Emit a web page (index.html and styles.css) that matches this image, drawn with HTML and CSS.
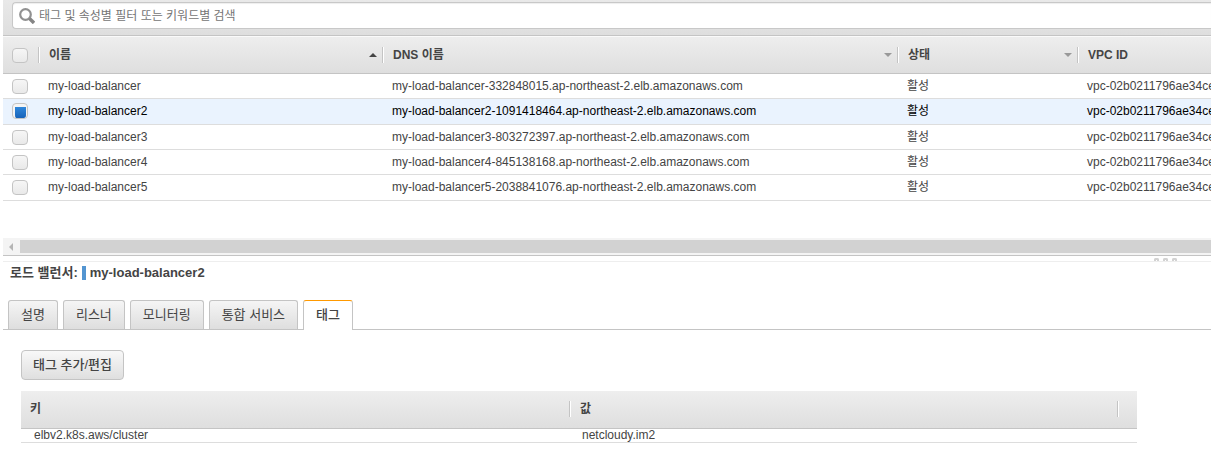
FILE: index.html
```html
<!DOCTYPE html>
<html lang="ko">
<head>
<meta charset="utf-8">
<title>로드 밸런서</title>
<link rel="stylesheet" href="styles.css">
</head>
<body>
<main class="console">
  <form class="search-bar">
    <label class="search-box">
      <svg class="search-icon" viewBox="0 0 16 16" aria-hidden="true">
        <circle cx="6.5" cy="6.5" r="5.3" fill="none" stroke="#919191" stroke-width="2.2"/>
        <path d="M10.5 10.5L15 15" fill="none" stroke="#858585" stroke-width="3.4"/>
      </svg>
      <input class="search-input" type="text" aria-label="검색" placeholder="태그 및 속성별 필터 또는 키워드별 검색">
    </label>
  </form>

  <div class="grid-area">
    <table class="grid">
      <colgroup><col class="col-check"><col class="col-name"><col class="col-dns"><col class="col-state"><col></colgroup>
      <thead>
        <tr>
          <th><input class="check" type="checkbox" aria-label="모두 선택"></th>
          <th><div class="head"><span>이름</span><span class="sort up"></span></div></th>
          <th><div class="head"><span>DNS 이름</span><span class="sort"></span></div></th>
          <th><div class="head"><span>상태</span><span class="sort"></span></div></th>
          <th><div class="head"><span>VPC ID</span></div></th>
        </tr>
      </thead>
      <tbody>
        <tr><td><input class="check" type="checkbox" aria-label="my-load-balancer"></td><td>my-load-balancer</td><td>my-load-balancer-332848015.ap-northeast-2.elb.amazonaws.com</td><td>활성</td><td>vpc-02b0211796ae34ce</td></tr>
        <tr class="selected"><td><input class="check" type="checkbox" aria-label="my-load-balancer2" checked></td><td>my-load-balancer2</td><td>my-load-balancer2-1091418464.ap-northeast-2.elb.amazonaws.com</td><td>활성</td><td>vpc-02b0211796ae34ce</td></tr>
        <tr><td><input class="check" type="checkbox" aria-label="my-load-balancer3"></td><td>my-load-balancer3</td><td>my-load-balancer3-803272397.ap-northeast-2.elb.amazonaws.com</td><td>활성</td><td>vpc-02b0211796ae34ce</td></tr>
        <tr><td><input class="check" type="checkbox" aria-label="my-load-balancer4"></td><td>my-load-balancer4</td><td>my-load-balancer4-845138168.ap-northeast-2.elb.amazonaws.com</td><td>활성</td><td>vpc-02b0211796ae34ce</td></tr>
        <tr class="last"><td><input class="check" type="checkbox" aria-label="my-load-balancer5"></td><td>my-load-balancer5</td><td>my-load-balancer5-2038841076.ap-northeast-2.elb.amazonaws.com</td><td>활성</td><td>vpc-02b0211796ae34ce</td></tr>
      </tbody>
    </table>
  </div>

  <div class="scrollbar"><span class="scroll-arrow"></span><span class="scroll-thumb"></span></div>
  <div class="splitter"><i></i><i></i><i></i></div>

  <section class="details">
    <h2 class="details-title">로드 밸런서:<span class="marker"></span>my-load-balancer2</h2>
    <nav class="tabs">
      <button class="tab" type="button">설명</button>
      <button class="tab" type="button">리스너</button>
      <button class="tab" type="button">모니터링</button>
      <button class="tab" type="button">통합 서비스</button>
      <button class="tab active" type="button">태그</button>
    </nav>
    <div class="panel">
      <button class="edit" type="button">태그 추가/편집</button>
      <table class="tags">
        <colgroup><col><col><col class="col-end"></colgroup>
        <thead><tr><th><div class="head">키</div></th><th><div class="head">값</div></th><th><div class="head"></div></th></tr></thead>
        <tbody><tr><td>elbv2.k8s.aws/cluster</td><td>netcloudy.im2</td><td></td></tr></tbody>
      </table>
    </div>
  </section>
</main>
</body>
</html>
```
FILE: styles.css
```css
* { box-sizing: border-box; }

body {
  margin: 0;
  background: #fff;
  color: #444;
  font: 12px/16px "Liberation Sans", "Noto Sans CJK KR", sans-serif;
  overflow: hidden;
}

button, input { font: inherit; color: inherit; }

.console { margin-left: 3px; }

.search-bar {
  padding: 2px 0 6px 9px;
  background: linear-gradient(#e9e9e9, #dedede);
  border-bottom: 1px solid #c4c4c4;
}

.search-box {
  display: flex;
  align-items: center;
  gap: 4px;
  height: 27px;
  padding: 1px 0 0 6px;
  background: #fff;
  border: 1px solid #c8c8c8;
  border-right: 0;
  border-radius: 4px 0 0 4px;
  box-shadow: inset 0 1px 1px #eee;
}

.search-icon { width: 16px; height: 16px; flex: none; }

.search-input {
  flex: 1;
  min-width: 0;
  padding: 0;
  border: 0;
  outline: 0;
  background: transparent;
  font-size: 12px;
}

.search-input::placeholder { color: #757575; opacity: 1; }

table { border-collapse: separate; border-spacing: 0; table-layout: fixed; width: 100%; }

th, td { padding: 0; text-align: left; white-space: nowrap; }

thead tr { background: linear-gradient(#eee, #dedede); }

th {
  height: 38px;
  border-bottom: 1px solid #c4c4c4;
  font-weight: 700;
}

.grid-area { min-height: 202px; }

.grid th { border-top: 1px solid #fafafa; }

.col-check { width: 35px; }
.col-name { width: 344px; }
.col-dns { width: 515px; }
.col-state { width: 180px; }

.head {
  display: flex;
  align-items: center;
  justify-content: space-between;
  height: 16px;
  padding: 0 5px 0 10px;
  border-left: 1px solid #c4c4c4;
  box-shadow: inset 1px 0 #fff;
}

.sort { border: 4px solid transparent; border-top: 4px solid #999; border-bottom: 0; }
.sort.up { border: 4px solid transparent; border-bottom: 4px solid #444; border-top: 0; }

.grid td {
  height: 25px;
  padding-left: 10px;
  border-bottom: 1px solid #ddd;
}

.grid .selected td { height: 26px; padding-bottom: 1px; background: #eaf3fe; color: #000; }
.grid .last td { height: 26px; padding-bottom: 1px; }

.grid th:first-child, .grid td:first-child { padding-left: 9px; }

.check {
  appearance: none;
  display: block;
  width: 16px;
  height: 15px;
  margin: 0;
  background: linear-gradient(#f6f6f6, #e9e9e9);
  border: 1px solid #c4c4c4;
  border-radius: 4px;
}

.check:checked {
  height: 16px;
  padding: 3px 1px 0 2px;
  background: linear-gradient(#2f86da, #1763b9) content-box, #f4f4f4;
}

.scrollbar {
  display: flex;
  align-items: center;
  height: 18px;
  background: #f4f4f4;
  border-bottom: 1px solid #c4c4c4;
}

.scroll-arrow { margin: 0 7px 0 6px; border: 4px solid transparent; border-right-color: #b5b5b5; border-left: 0; }
.scroll-thumb { flex: 1; height: 13px; background: #d2d2d2; }

.splitter {
  display: flex;
  align-items: flex-end;
  justify-content: flex-end;
  gap: 4px;
  height: 6px;
  padding-right: 34px;
  border-bottom: 1px solid #eee;
}

.splitter i { width: 5px; height: 3px; border: 2px solid #d2d2d2; border-bottom: 0; border-radius: 2px 2px 0 0; }

.details-title {
  display: flex;
  align-items: center;
  gap: 4px;
  margin: 0;
  padding: 2px 7px 0;
  font-size: 13px;
  line-height: 18px;
}

.marker { width: 4px; height: 14px; background: #5395d1; }

.tabs {
  display: flex;
  gap: 5px;
  padding: 18px 5px 0;
  border-bottom: 1px solid #c4c4c4;
}

.tab {
  height: 29px;
  padding: 0 12px 1px;
  background: linear-gradient(#f5f5f5, #dedede);
  border: 1px solid #c4c4c4;
  border-bottom: 0;
  border-radius: 3px 3px 0 0;
  font-size: 13px;
}

.tab.active {
  height: 30px;
  margin-bottom: -1px;
  padding-bottom: 2px;
  background: #fff;
  border-top: 1px solid #f90;
  font-weight: 500;
}

.panel { padding: 20px 74px 0 18px; }

.edit {
  display: block;
  height: 30px;
  margin-bottom: 11px;
  padding: 0 11px 1px;
  background: linear-gradient(#f8f8f8, #dfdfdf);
  border: 1px solid #c4c4c4;
  border-radius: 4px;
  font-size: 13px;
  font-weight: 500;
}

.col-end { width: 20px; }

.tags th { padding-bottom: 1px; }
.tags th:first-child .head { padding-left: 9px; border-left: 0; box-shadow: none; }

.tags td {
  height: 14px;
  padding-left: 13px;
  border-bottom: 1px solid #ddd;
  line-height: 13px;
}
```
